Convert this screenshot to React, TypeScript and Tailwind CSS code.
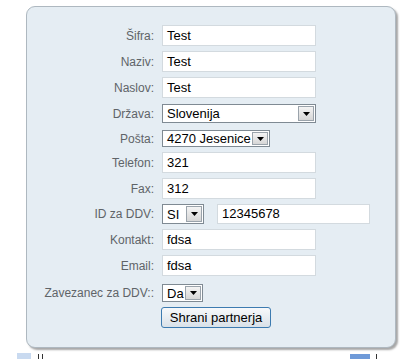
const font = { fontFamily: '"Liberation Sans", Arial, sans-serif' }

function Arrow() {
  return (
    <span className="flex h-full w-[16px] shrink-0 items-center justify-center border border-[#9aa3ab] bg-gradient-to-b from-[#f4f4f4] to-[#d6d6d6]">
      <svg width="7" height="4" viewBox="0 0 7 4">
        <path d="M0 0H7L3.5 4Z" fill="#000" />
      </svg>
    </span>
  )
}

function TextBox({ value, w = "w-[154px]" }: { value: string; w?: string }) {
  return (
    <div className={`${w} flex h-full items-center border border-[#d3dadf] bg-white pl-[4px] text-[13px] text-black`}>
      {value}
    </div>
  )
}

function Select({ value, w }: { value: string; w: string }) {
  return (
    <div className={`${w} flex h-full items-center border border-[#7f8a93] bg-white p-[1px] text-[13px] text-black`}>
      <span className="flex-1 pl-[3px] leading-none">{value}</span>
      <Arrow />
    </div>
  )
}

function Row({ label, h, mt, children }: { label: string; h: string; mt: string; children: React.ReactNode }) {
  return (
    <div className={`flex ${h} ${mt} items-center`}>
      <div className="w-[128px] shrink-0 pr-[1px] text-right text-[12px] text-[#5f6468]">{label}</div>
      <div className="ml-[7px] flex h-full items-center gap-[13px]">{children}</div>
    </div>
  )
}

export default function App() {
  return (
    <div className="relative h-[359px] w-[406px] overflow-hidden bg-white" style={font}>
      <div className="ml-[26px] mt-[6px] h-[342px] w-[370px] rounded-[9px] border border-[#aeb8c0] bg-[#e5edf3] shadow-[2px_2px_2px_rgba(0,0,0,0.35)]">
        <div className="flex flex-col pt-[18px]">
          <Row label="Šifra:" h="h-[21px]" mt="mt-0"><TextBox value="Test" /></Row>
          <Row label="Naziv:" h="h-[21px]" mt="mt-[5px]"><TextBox value="Test" /></Row>
          <Row label="Naslov:" h="h-[21px]" mt="mt-[5px]"><TextBox value="Test" /></Row>
          <Row label="Država:" h="h-[19px]" mt="mt-[6px]"><Select value="Slovenija" w="w-[154px]" /></Row>
          <Row label="Pošta:" h="h-[17px]" mt="mt-[7px]"><Select value="4270 Jesenice" w="w-[108px]" /></Row>
          <Row label="Telefon:" h="h-[21px]" mt="mt-[5px]"><TextBox value="321" /></Row>
          <Row label="Fax:" h="h-[21px]" mt="mt-[5px]"><TextBox value="312" /></Row>
          <Row label="ID za DDV:" h="h-[20px]" mt="mt-[5px]">
            <Select value="SI" w="w-[42px]" />
            <TextBox value="12345678" w="w-[153px]" />
          </Row>
          <Row label="Kontakt:" h="h-[21px]" mt="mt-[5px]"><TextBox value="fdsa" /></Row>
          <Row label="Email:" h="h-[21px]" mt="mt-[5px]"><TextBox value="fdsa" /></Row>
          <Row label="Zavezanec za DDV::" h="h-[18px]" mt="mt-[8px]"><Select value="Da" w="w-[41px]" /></Row>
          <div className="mt-[5px] flex h-[21px]">
            <button className="ml-[134px] h-full w-[110px] rounded-[3px] border border-[#3d7bb0] bg-gradient-to-b from-[#f7f9fb] to-[#d9e1e8] text-[13px] text-black" style={font}>
              Shrani partnerja
            </button>
          </div>
        </div>
      </div>
      <div className="absolute left-[17px] top-[353px] h-[6px] w-[14px] bg-[#c9daf0]" />
      <div className="absolute left-[38px] top-[354px] h-[5px] w-[1px] bg-[#333]" />
      <div className="absolute left-[42px] top-[354px] h-[5px] w-[1px] bg-[#333]" />
      <div className="absolute left-[350px] top-[354px] h-[5px] w-[20px] bg-[#6f9ad8]" />
      <div className="absolute left-[376px] top-[354px] h-[5px] w-[1px] bg-[#333]" />
    </div>
  )
}
